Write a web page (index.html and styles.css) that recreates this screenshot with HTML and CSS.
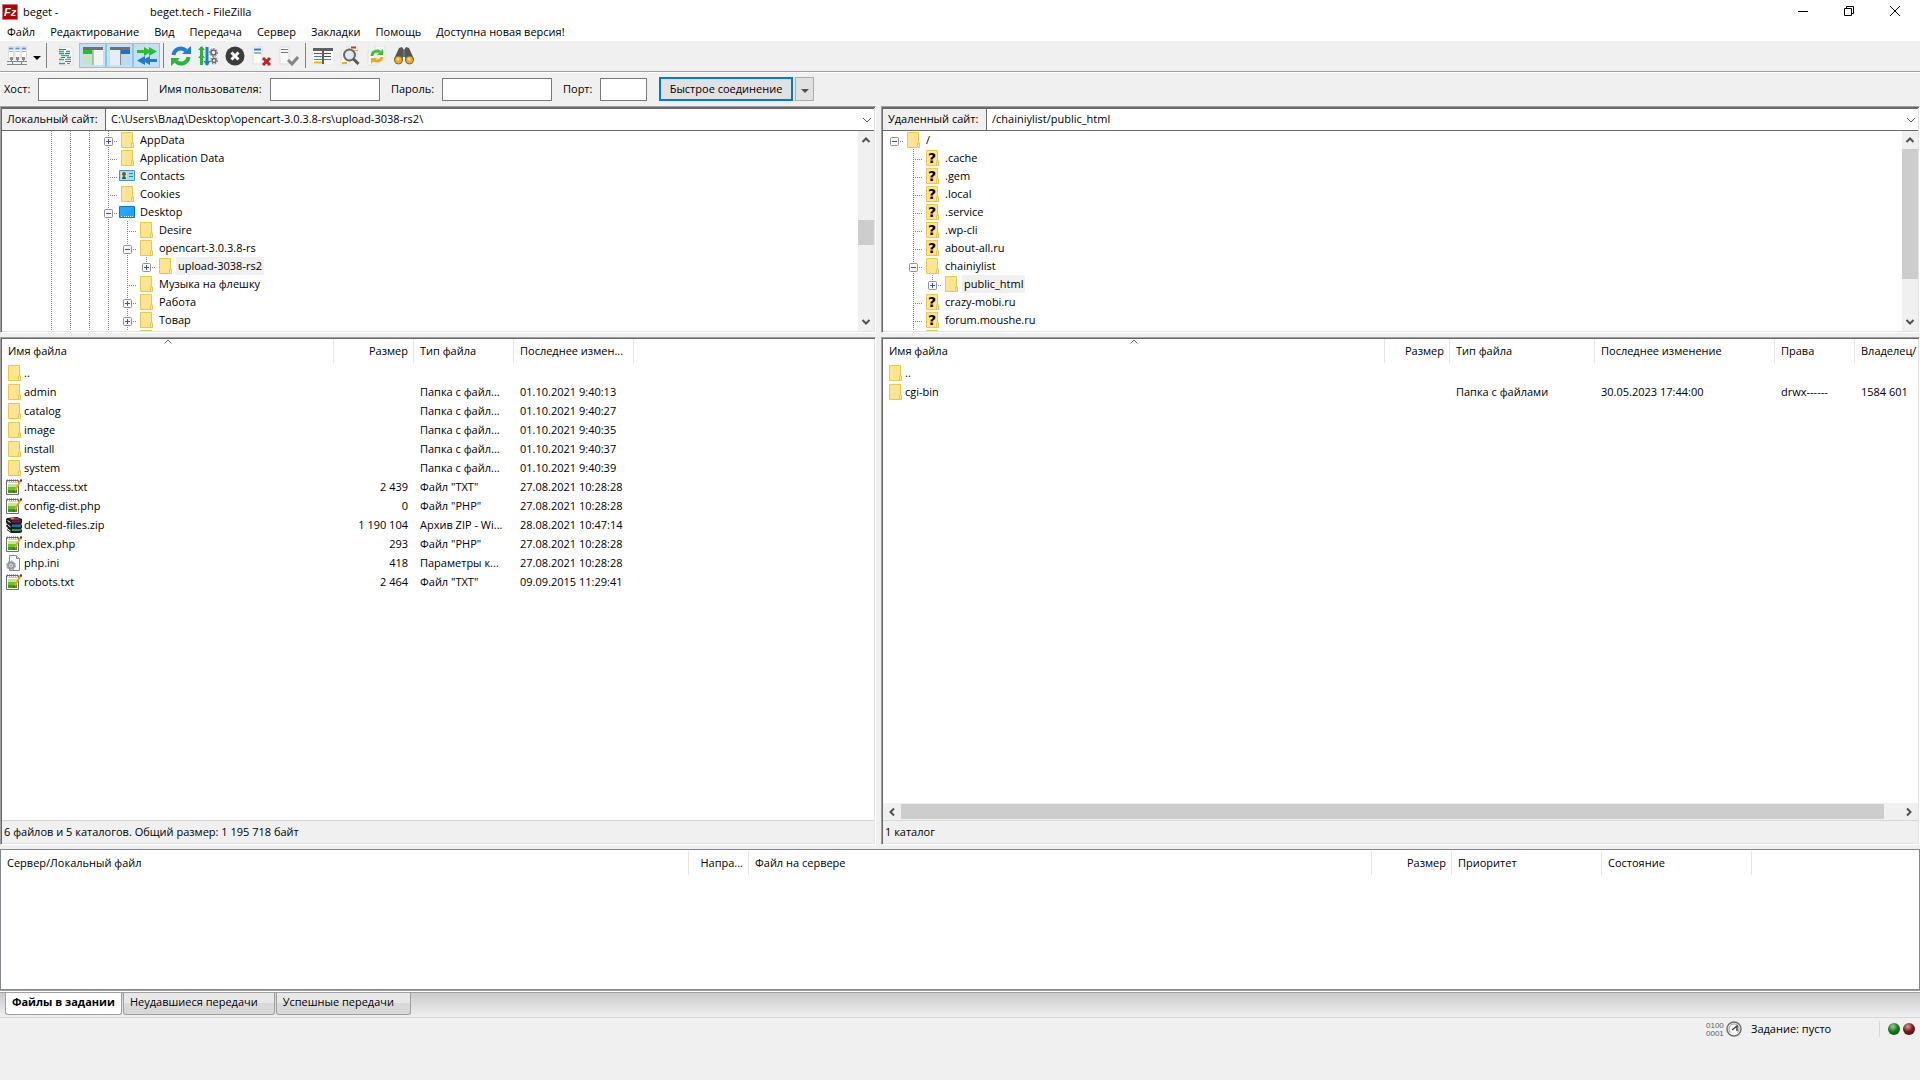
FILE: index.html
```html
<!DOCTYPE html>
<html lang="ru">
    <head>
        <meta charset="UTF-8">
        <meta name="viewport" content="width=device-width, initial-scale=1.0">
        <title>beget.tech - FileZilla</title>
        <link rel="stylesheet" href="styles.css">
    </head>
<body>
    <!-- Общие иконки -->
    <svg class="sprite" width="0" height="0">
        <symbol id="folder" viewBox="0 0 16 16">
            <path d="M2.500.5h11v10.500h1v4.500h-12z" fill="#ffe492" stroke="#eac84e"/>
            <path d="M12.500 15.500v-4.500h2v4.500z" fill="#ffe9a6" stroke="#eac84e"/>
        </symbol>
        <symbol id="unknown" viewBox="0 0 16 16">
            <use href="#folder"/>
            <text x="4" y="13" font-family="DejaVu Sans" font-weight="bold" font-size="14">?</text>
        </symbol>
        <symbol id="contacts" viewBox="0 0 16 16">
            <path d="M.5 2.500h15v10h-15z" fill="#a9dcf2" stroke="#4a97bd"/>
            <path d="M2 4h6v7h-6z" fill="#d8e8d8"/>
            <circle cx="5" cy="6" r="2" fill="#6b5a3c"/>
            <path d="M3 11c0-4 4-4 4 0z" fill="#2f5d4a"/>
            <path d="M10 5.500h4M10 8.500h4" stroke="#3d7da6"/>
        </symbol>
        <symbol id="desktop" viewBox="0 0 16 16">
            <path d="M.5 2.500h15v11h-15z" fill="#18a4fb" stroke="#0a7bd0"/>
            <path d="M1 3h12l-8 9h-4z" fill="#22a9ff"/>
            <path d="M2 12.500h2M5 12.500h7M13 12.500h1" stroke="#d8f0ff" stroke-dasharray="1 1"/>
        </symbol>
        <symbol id="plus" viewBox="0 0 9 9">
            <rect x=".5" y=".5" width="8" height="8" rx="1" fill="#f8f8f8" stroke="#919191"/>
            <path d="M2 4.500h5M4.500 2v5" stroke="#3a55a8"/>
        </symbol>
        <symbol id="minus" viewBox="0 0 9 9">
            <rect x=".5" y=".5" width="8" height="8" rx="1" fill="#f8f8f8" stroke="#919191"/>
            <path d="M2 4.500h5" stroke="#3a55a8"/>
        </symbol>
        <symbol id="note" viewBox="0 0 16 16">
            <path d="M.5 1.500h12v14h-12z" fill="#fff" stroke="#6e6e6e"/>
            <path d="M2 5h9v9h-9z" fill="#c4e88a"/>
            <path d="M2 8h9v6h-9z" fill="#6cc22c"/>
            <path d="M2 11h9v3h-9z" fill="#3f9a18"/>
            <path d="M1 1.500h11" stroke="#666" stroke-width="2" stroke-dasharray="1 1"/>
            <path d="M2.500 3.500h9" stroke="#ccc"/>
            <path d="M14.500 2l-6 10" stroke="#f0a020" stroke-width="2"/>
            <path d="M15.500.5l-1 2" stroke="#8c1a1a" stroke-width="2"/>
            <path d="M8.500 11.500l-1 2" stroke="#333"/>
        </symbol>
        <symbol id="zip" viewBox="0 0 16 16">
            <path d="M1 1l10-1 5 2v4l-1 1 1 1v3l-1 1 1 1v2l-2 1h-9l-4-3 1-2-2-2 1-2-2-3z" fill="#1a1a1a"/>
            <path d="M3 1l8-.5 4 2-9 .5z" fill="#a03060"/>
            <path d="M6 3.500h9v2h-9z" fill="#8c1548"/>
            <path d="M6 7.500h9v2.500h-9z" fill="#1f6fae"/>
            <path d="M6 12h9v2h-9z" fill="#1d9a5b"/>
            <path d="M1.500 3.500l3 2M1.500 7.500l3 2.500M1.500 12l3 2" stroke="#fff"/>
            <path d="M5 2l3-1" stroke="#e5b820"/>
        </symbol>
        <symbol id="ini" viewBox="0 0 16 16">
            <path d="M3.500.5h7l3 3v12h-10z" fill="#fafafa" stroke="#8b8b8b"/>
            <path d="M10.500.5v3h3" fill="#ddd" stroke="#8b8b8b"/>
            <circle cx="5" cy="10.500" r="3" fill="#dde3e8" stroke="#8e979f" stroke-width="2"/>
            <circle cx="5" cy="10.500" r="4.500" fill="none" stroke="#8e979f" stroke-dasharray="2 1.500"/>
            <circle cx="5" cy="10.500" r="1" fill="#8e979f"/>
        </symbol>
        <symbol id="up" viewBox="0 0 10 10"><path d="M1.500 7l3.500-3.500 3.500 3.500" fill="none" stroke="#505050" stroke-width="2"/></symbol>
        <symbol id="down" viewBox="0 0 10 10"><path d="M1.500 3l3.500 3.500 3.500-3.500" fill="none" stroke="#505050" stroke-width="2"/></symbol>
        <symbol id="left" viewBox="0 0 10 10"><path d="M7 1.500l-3.500 3.500 3.500 3.500" fill="none" stroke="#505050" stroke-width="2"/></symbol>
        <symbol id="right" viewBox="0 0 10 10"><path d="M3 1.500l3.500 3.500-3.500 3.500" fill="none" stroke="#505050" stroke-width="2"/></symbol>
        <symbol id="chevron" viewBox="0 0 10 10"><path d="M1 3l4 4 4-4" fill="none" stroke="#555"/></symbol>
        <symbol id="sort" viewBox="0 0 8 5"><path d="M.5 4.500l3.500-3.500 3.500 3.500" fill="none" stroke="#666"/></symbol>
        <symbol id="arrow" viewBox="0 0 8 4"><path d="M0 0h8l-4 4z"/></symbol>
    </svg>

    <header class="titlebar">
        <svg class="logo" viewBox="0 0 16 16">
            <rect x=".5" y=".5" width="15" height="15" fill="#b30000" stroke="#d86060" stroke-dasharray="1 1"/>
            <text x="2" y="12" font-family="Liberation Sans" font-weight="bold" font-style="italic" font-size="11" fill="#fff">Fz</text>
        </svg>
        <span class="title-site">beget -</span>
        <span>beget.tech - FileZilla</span>
        <div class="window-buttons">
            <button aria-label="Свернуть"><svg width="10" height="10"><path d="M0 5.500h10" stroke="#000"/></svg></button>
            <button aria-label="Восстановить"><svg width="10" height="10"><path d="M.5 2.500h7v7h-7zM2.500 2v-1.500h7v7h-2" fill="none" stroke="#000"/></svg></button>
            <button aria-label="Закрыть"><svg width="10" height="10"><path d="M0 0l10 10M10 0l-10 10" stroke="#000"/></svg></button>
        </div>
    </header>

    <nav class="menu">
        <button>Файл</button>
        <button>Редактирование</button>
        <button>Вид</button>
        <button>Передача</button>
        <button>Сервер</button>
        <button>Закладки</button>
        <button>Помощь</button>
        <button>Доступна новая версия!</button>
    </nav>

    <div class="toolbar">
        <div class="tools">
            <button class="tool" aria-label="Менеджер сайтов"><svg viewBox="0 0 20 20">
                <path d="M1.500.5h5v12h-5zM8 .5h5v12h-5zM14.500.5h5v12h-5z" fill="#fff" stroke="#dcdcdc"/>
                <path d="M2 2.500h4M8.500 2.500h4M15 2.500h4" stroke="#5a9ad8" stroke-width="2"/>
                <path d="M2 5.500h4M8.500 5.500h4M15 5.500h4" stroke="#b5b5b5"/>
                <path d="M0 15.500h20M4.500 13v3M10.500 13v3M16.500 13v3M5.500 16v2M14.500 16v2M0 18.500h20" stroke="#858585"/>
                <path d="M3 11h3v3h-3zM9 11h3v3h-3zM15 11h3v3h-3z" fill="#8a8a8a"/>
            </svg></button>
            <button class="tool-arrow" aria-label="Список сайтов"><svg width="8" height="4"><use href="#arrow"/></svg></button>
        </div>
        <div class="tools tools-view">
            <button class="tool" aria-label="Журнал сообщений"><svg viewBox="0 0 20 20">
                <path d="M4 1h10l3 3v15h-13z" fill="#fafafa" stroke="#dedede"/>
                <path d="M3 3.500h7M9 7.500h5M5 11.500h4M9 15.500h6" stroke="#6a6a6a"/>
                <path d="M10 5.500h4M3 7.500h5M11 11.500h4M3 17.500h6" stroke="#3f8fd0" stroke-width="1.500"/>
                <path d="M3 5.500h5M5 9.500h8M3 13.500h5" stroke="#50b050" stroke-width="1.500"/>
                <path d="M9 13.500h6M11 17.500h3" stroke="#8a8a8a"/>
            </svg></button>
            <button class="tool pressed" aria-label="Локальное дерево"><svg viewBox="0 0 20 20">
                <path d="M0 2h20v17h-20z" fill="#f2f4f2"/><path d="M0 5h10v14h-10z" fill="#c5e5c0"/>
                <path d="M0 1h20v3h-20z" fill="#707070"/><path d="M0 4h9v4h-9z" fill="#22c02a"/>
                <path d="M10 4v15" stroke="#888"/>
            </svg></button>
            <button class="tool pressed" aria-label="Удаленное дерево"><svg viewBox="0 0 20 20">
                <path d="M0 2h20v17h-20z" fill="#e4eef6"/><path d="M11 5h9v14h-9z" fill="#bcd8f2"/>
                <path d="M0 1h20v3h-20z" fill="#707070"/><path d="M11 4h9v4h-9z" fill="#2070c8"/>
                <path d="M10.500 4v15" stroke="#888"/>
            </svg></button>
            <button class="tool pressed" aria-label="Очередь передачи"><svg viewBox="0 0 20 20">
                <path d="M0 4h7v-3l5 3v-3l8 4.500-8 4.500v-3l-5 3v-3h-7z" fill="#25c02c"/>
                <path d="M20 13h-7v-3l-5 3v-3l-8 4.500 8 4.500v-3l5 3v-3h7z" fill="#2378c8"/>
            </svg></button>
        </div>
        <div class="tools">
            <button class="tool" aria-label="Обновить"><svg viewBox="0 0 20 20">
                <path d="M2.500 9a7.500 7.500 0 0 1 12.500-4.500" fill="none" stroke="#1f80d0" stroke-width="4"/>
                <path d="M11 8h9v-8z" fill="#1f80d0"/>
                <path d="M17.500 11a7.500 7.500 0 0 1-12.500 4.500" fill="none" stroke="#25b83a" stroke-width="4"/>
                <path d="M9 12h-9v8z" fill="#25b83a"/>
            </svg></button>
            <button class="tool" aria-label="Обработка очереди"><svg viewBox="0 0 20 20">
                <path d="M3.500 1v18" stroke="#25b83a" stroke-width="3"/><path d="M0 4l3.500-4 3.500 4M0 12l3.500-4 3.500 4" fill="#25b83a"/>
                <path d="M9 1v18" stroke="#1f80d0" stroke-width="3"/><path d="M5.500 15l3.500 5 3.500-5z" fill="#1f80d0"/>
                <circle cx="15.500" cy="6.500" r="2.500" fill="none" stroke="#666" stroke-width="1.500"/>
                <circle cx="15.500" cy="6.500" r="4" fill="none" stroke="#666" stroke-dasharray="1.500 1.500"/>
                <circle cx="16" cy="14.500" r="2" fill="none" stroke="#666" stroke-width="1.500"/>
                <circle cx="16" cy="14.500" r="3.500" fill="none" stroke="#666" stroke-dasharray="1.500 1.500"/>
            </svg></button>
            <button class="tool" aria-label="Отменить"><svg viewBox="0 0 20 20">
                <circle cx="10" cy="10" r="9.500" fill="#3c3c3c"/>
                <path d="M6.500 6.500l7 7M13.500 6.500l-7 7" stroke="#fff" stroke-width="3"/>
            </svg></button>
            <button class="tool" aria-label="Отключиться"><svg viewBox="0 0 20 20">
                <path d="M1 1h9v17h-9z" fill="#fafafa" stroke="#ddd"/>
                <path d="M2 3.500h7" stroke="#2f80d0" stroke-width="2"/><path d="M2 7h7" stroke="#666"/>
                <path d="M11 12l7 7M18 12l-7 7" stroke="#c81e1e" stroke-width="3"/>
            </svg></button>
            <button class="tool" aria-label="Переподключиться"><svg viewBox="0 0 20 20">
                <path d="M1 1h9v17h-9z" fill="#fafafa" stroke="#ddd"/>
                <path d="M2 3.500h7M2 6.500h7" stroke="#777"/>
                <path d="M9 14l4 4 6-7" fill="none" stroke="#858585" stroke-width="3"/>
            </svg></button>
        </div>
        <div class="tools">
            <button class="tool" aria-label="Фильтры"><svg viewBox="0 0 20 20">
                <path d="M0 3h20v15h-20z" fill="#fafafa"/><path d="M0 2h20v3h-20z" fill="#606060"/>
                <path d="M1 7.500h8" stroke="#d03030"/><path d="M1 10.500h8" stroke="#2f80d0"/>
                <path d="M11 7.500h7M11 10.500h7" stroke="#505050"/><path d="M1 13.500h17" stroke="#30b040"/>
                <path d="M1 16.500h8" stroke="#f0b020" stroke-width="2"/><path d="M10 4v14" stroke="#606060" stroke-width="2"/>
            </svg></button>
            <button class="tool" aria-label="Сравнение каталогов"><svg viewBox="0 0 20 20">
                <path d="M9 0h8v14h-8zM1 5h9v14h-9z" fill="#fafafa" stroke="#e0e0e0"/>
                <path d="M11 1.500h5" stroke="#d03030" stroke-width="2"/><path d="M2 17h5" stroke="#f0b020" stroke-width="2"/><path d="M14 4.500h4" stroke="#f0b020"/>
                <circle cx="9.500" cy="9" r="5.500" fill="#dfe8ee" stroke="#666" stroke-width="2"/>
                <path d="M13.500 13l5 5" stroke="#555" stroke-width="3"/>
            </svg></button>
            <button class="tool" aria-label="Синхронный просмотр"><svg viewBox="0 0 20 20">
                <path d="M8 0h10v14h-10zM1 6h9v13h-9z" fill="#fafafa" stroke="#e0e0e0"/>
                <path d="M5 10a5 5 0 0 1 8-4" fill="none" stroke="#40c030" stroke-width="3"/><path d="M10 9h6v-6z" fill="#40c030"/>
                <path d="M15 11a5 5 0 0 1-8 3" fill="none" stroke="#f0a818" stroke-width="3"/><path d="M10 12h-6v6z" fill="#f0a818"/>
            </svg></button>
            <button class="tool" aria-label="Поиск файлов"><svg viewBox="0 0 20 20">
                <path d="M5 2l3-1 2 3 2-3 3 1 5 11-8 3-1-5h-2l-1 5-8-3z" fill="#555"/>
                <path d="M10 4v7" stroke="#888"/>
                <circle cx="4.500" cy="14" r="4" fill="#f5ab14" stroke="#666"/>
                <circle cx="15.500" cy="14" r="4" fill="#f5ab14" stroke="#666"/>
                <circle cx="4" cy="13" r="1.500" fill="#ffdc70"/><circle cx="15" cy="13" r="1.500" fill="#ffdc70"/>
            </svg></button>
        </div>
    </div>

    <form class="quickconnect">
        <label for="host">Хост:</label>
        <input type="text" id="host">
        <label for="user">Имя пользователя:</label>
        <input type="text" id="user">
        <label for="pass">Пароль:</label>
        <input type="password" id="pass">
        <label for="port">Порт:</label>
        <input type="text" id="port">
        <div class="connect">
            <button type="button" class="connect-button">Быстрое соединение</button>
            <button type="button" class="connect-list" aria-label="История"><svg width="8" height="4" fill="#505050"><use href="#arrow"/></svg></button>
        </div>
    </form>

    <main class="sites">
        <section class="site">
            <div class="tree-panel">
                <div class="address">
                    <label for="local-path">Локальный сайт:</label>
                    <select id="local-path"><option>C:\Users\Влад\Desktop\opencart-3.0.3.8-rs\upload-3038-rs2\</option></select>
                    <svg class="address-arrow"><use href="#chevron"/></svg>
                </div>
                <div class="tree-area">
                    <ul class="tree tree-local">
                        <li><i class="v"></i><i class="v"></i><i class="v"></i><i class="v h"><svg><use href="#plus"/></svg></i><svg class="icon"><use href="#folder"/></svg><span>AppData</span></li>
                        <li><i class="v"></i><i class="v"></i><i class="v"></i><i class="v h"></i><svg class="icon"><use href="#folder"/></svg><span>Application Data</span></li>
                        <li><i class="v"></i><i class="v"></i><i class="v"></i><i class="v h"></i><svg class="icon"><use href="#contacts"/></svg><span>Contacts</span></li>
                        <li><i class="v"></i><i class="v"></i><i class="v"></i><i class="v h"></i><svg class="icon"><use href="#folder"/></svg><span>Cookies</span></li>
                        <li><i class="v"></i><i class="v"></i><i class="v"></i><i class="v h"><svg><use href="#minus"/></svg></i><svg class="icon"><use href="#desktop"/></svg><span>Desktop</span></li>
                        <li><i class="v"></i><i class="v"></i><i class="v"></i><i class="v"></i><i class="v h"></i><svg class="icon"><use href="#folder"/></svg><span>Desire</span></li>
                        <li><i class="v"></i><i class="v"></i><i class="v"></i><i class="v"></i><i class="v h"><svg><use href="#minus"/></svg></i><svg class="icon"><use href="#folder"/></svg><span>opencart-3.0.3.8-rs</span></li>
                        <li><i class="v"></i><i class="v"></i><i class="v"></i><i class="v"></i><i class="v"></i><i class="v h last"><svg><use href="#plus"/></svg></i><svg class="icon"><use href="#folder"/></svg><span class="selected">upload-3038-rs2</span></li>
                        <li><i class="v"></i><i class="v"></i><i class="v"></i><i class="v"></i><i class="v h"></i><svg class="icon"><use href="#folder"/></svg><span>Музыка на флешку</span></li>
                        <li><i class="v"></i><i class="v"></i><i class="v"></i><i class="v"></i><i class="v h"><svg><use href="#plus"/></svg></i><svg class="icon"><use href="#folder"/></svg><span>Работа</span></li>
                        <li><i class="v"></i><i class="v"></i><i class="v"></i><i class="v"></i><i class="v h"><svg><use href="#plus"/></svg></i><svg class="icon"><use href="#folder"/></svg><span>Товар</span></li>
                        <li><i class="v"></i><i class="v"></i><i class="v"></i><i class="v"></i><i class="v h"></i><svg class="icon"><use href="#folder"/></svg></li>
                    </ul>
                    <div class="scroll">
                        <svg><use href="#up"/></svg>
                        <div class="track track-local"><div class="thumb"></div></div>
                        <svg><use href="#down"/></svg>
                    </div>
                </div>
            </div>

            <div class="list-panel">
                <div class="list">
                    <table class="files">
                        <colgroup><col class="c-name-local"><col class="c-80"><col class="c-100"><col class="c-120"></colgroup>
                        <thead>
                            <tr><th>Имя файла<svg class="sort"><use href="#sort"/></svg></th><th class="num">Размер</th><th>Тип файла</th><th>Последнее измен...</th></tr>
                        </thead>
                        <tbody>
                            <tr><td><svg class="icon"><use href="#folder"/></svg>..</td><td></td><td></td><td></td></tr>
                            <tr><td><svg class="icon"><use href="#folder"/></svg>admin</td><td></td><td>Папка с файл...</td><td>01.10.2021 9:40:13</td></tr>
                            <tr><td><svg class="icon"><use href="#folder"/></svg>catalog</td><td></td><td>Папка с файл...</td><td>01.10.2021 9:40:27</td></tr>
                            <tr><td><svg class="icon"><use href="#folder"/></svg>image</td><td></td><td>Папка с файл...</td><td>01.10.2021 9:40:35</td></tr>
                            <tr><td><svg class="icon"><use href="#folder"/></svg>install</td><td></td><td>Папка с файл...</td><td>01.10.2021 9:40:37</td></tr>
                            <tr><td><svg class="icon"><use href="#folder"/></svg>system</td><td></td><td>Папка с файл...</td><td>01.10.2021 9:40:39</td></tr>
                            <tr><td><svg class="icon"><use href="#note"/></svg>.htaccess.txt</td><td class="num">2 439</td><td>Файл "TXT"</td><td>27.08.2021 10:28:28</td></tr>
                            <tr><td><svg class="icon"><use href="#note"/></svg>config-dist.php</td><td class="num">0</td><td>Файл "PHP"</td><td>27.08.2021 10:28:28</td></tr>
                            <tr><td><svg class="icon"><use href="#zip"/></svg>deleted-files.zip</td><td class="num">1 190 104</td><td>Архив ZIP - Wi...</td><td>28.08.2021 10:47:14</td></tr>
                            <tr><td><svg class="icon"><use href="#note"/></svg>index.php</td><td class="num">293</td><td>Файл "PHP"</td><td>27.08.2021 10:28:28</td></tr>
                            <tr><td><svg class="icon"><use href="#ini"/></svg>php.ini</td><td class="num">418</td><td>Параметры к...</td><td>27.08.2021 10:28:28</td></tr>
                            <tr><td><svg class="icon"><use href="#note"/></svg>robots.txt</td><td class="num">2 464</td><td>Файл "TXT"</td><td>09.09.2015 11:29:41</td></tr>
                        </tbody>
                    </table>
                </div>
                <div class="list-status">6 файлов и 5 каталогов. Общий размер: 1 195 718 байт</div>
            </div>
        </section>

        <section class="site">
            <div class="tree-panel">
                <div class="address">
                    <label for="remote-path">Удаленный сайт:</label>
                    <select id="remote-path"><option>/chainiylist/public_html</option></select>
                    <svg class="address-arrow"><use href="#chevron"/></svg>
                </div>
                <div class="tree-area">
                    <ul class="tree">
                        <li><i class="h"><svg><use href="#minus"/></svg></i><svg class="icon"><use href="#folder"/></svg><span>/</span></li>
                        <li><i></i><i class="v h"></i><svg class="icon"><use href="#unknown"/></svg><span>.cache</span></li>
                        <li><i></i><i class="v h"></i><svg class="icon"><use href="#unknown"/></svg><span>.gem</span></li>
                        <li><i></i><i class="v h"></i><svg class="icon"><use href="#unknown"/></svg><span>.local</span></li>
                        <li><i></i><i class="v h"></i><svg class="icon"><use href="#unknown"/></svg><span>.service</span></li>
                        <li><i></i><i class="v h"></i><svg class="icon"><use href="#unknown"/></svg><span>.wp-cli</span></li>
                        <li><i></i><i class="v h"></i><svg class="icon"><use href="#unknown"/></svg><span>about-all.ru</span></li>
                        <li><i></i><i class="v h"><svg><use href="#minus"/></svg></i><svg class="icon"><use href="#folder"/></svg><span>chainiylist</span></li>
                        <li><i></i><i class="v"></i><i class="v h last"><svg><use href="#plus"/></svg></i><svg class="icon"><use href="#folder"/></svg><span class="selected">public_html</span></li>
                        <li><i></i><i class="v h"></i><svg class="icon"><use href="#unknown"/></svg><span>crazy-mobi.ru</span></li>
                        <li><i></i><i class="v h"></i><svg class="icon"><use href="#unknown"/></svg><span>forum.moushe.ru</span></li>
                        <li><i></i><i class="v h"></i><svg class="icon"><use href="#folder"/></svg></li>
                    </ul>
                    <div class="scroll">
                        <svg><use href="#up"/></svg>
                        <div class="track"><div class="thumb thumb-remote"></div></div>
                        <svg><use href="#down"/></svg>
                    </div>
                </div>
            </div>

            <div class="list-panel">
                <div class="list">
                    <table class="files">
                        <colgroup><col class="c-name-remote"><col class="c-65"><col class="c-145"><col class="c-180"><col class="c-80"><col class="c-80"></colgroup>
                        <thead>
                            <tr><th>Имя файла<svg class="sort"><use href="#sort"/></svg></th><th class="num">Размер</th><th>Тип файла</th><th>Последнее изменение</th><th>Права</th><th>Владелец/</th></tr>
                        </thead>
                        <tbody>
                            <tr><td><svg class="icon"><use href="#folder"/></svg>..</td><td></td><td></td><td></td><td></td><td></td></tr>
                            <tr><td><svg class="icon"><use href="#folder"/></svg>cgi-bin</td><td></td><td>Папка с файлами</td><td>30.05.2023 17:44:00</td><td>drwx------</td><td>1584 601</td></tr>
                        </tbody>
                    </table>
                </div>
                <div class="scroll scroll-bottom">
                    <svg><use href="#left"/></svg>
                    <div class="track"><div class="thumb"></div></div>
                    <svg><use href="#right"/></svg>
                </div>
                <div class="list-status">1 каталог</div>
            </div>
        </section>
    </main>

    <section class="queue">
        <table class="files">
            <colgroup><col class="c-server"><col class="c-60"><col class="c-remote"><col class="c-80"><col class="c-150"><col class="c-150"></colgroup>
            <thead>
                <tr><th>Сервер/Локальный файл</th><th class="num">Напра...</th><th>Файл на сервере</th><th class="num">Размер</th><th>Приоритет</th><th>Состояние</th></tr>
            </thead>
        </table>
    </section>

    <div class="tabs">
        <button class="tab active">Файлы в задании</button>
        <button class="tab">Неудавшиеся передачи</button>
        <button class="tab">Успешные передачи</button>
    </div>

    <footer class="statusbar">
        <svg width="18" height="16" font-family="Liberation Sans" font-size="8" fill="#606060">
            <text x="0" y="7">0100</text>
            <text x="0" y="15">0001</text>
        </svg>
        <svg width="16" height="16" fill="none" stroke="#707070">
            <circle cx="8" cy="8" r="7" fill="#f8f8f8" stroke-width="1.500"/>
            <path d="M4.500 11.500a5 5 0 1 1 7 0" stroke="#999"/>
            <path d="M6 9l5-4v5" stroke="#444" stroke-width="1.500"/>
        </svg>
        <span class="queue-state">Задание: пусто</span>
        <span class="led led-green"></span>
        <span class="led led-red"></span>
    </footer>
</body>
</html>
```
FILE: styles.css
```css
* {
    box-sizing: border-box;
}

body {
    display: flex;
    flex-direction: column;
    min-height: 100vh;
    margin: 0;
    background-color: #F0F0F0;
    color: #000000;
    font-family: "Open Sans", "Noto Sans", sans-serif;
    font-size: 11px;
    line-height: 16px;
}

button, input, select {
    font: inherit;
    color: inherit;
    margin: 0;
    padding: 0;
    border: none;
    border-radius: 0;
    background: none;
}

.sprite {
    position: absolute;
}

.icon {
    width: 16px;
    height: 16px;
    flex: none;
}

/* Заголовок окна */
.titlebar {
    display: flex;
    align-items: center;
    height: 24px;
    padding-left: 2px;
    background-color: #FFFFFF;
}

.logo {
    width: 16px;
    height: 16px;
    margin-right: 5px;
}

.title-site {
    width: 127px;
}

.window-buttons {
    display: flex;
    margin-left: auto;
    padding-right: 2px;
}

.window-buttons button {
    display: flex;
    align-items: center;
    justify-content: center;
    width: 46px;
    height: 24px;
    padding-bottom: 3px;
}

/* Меню */
.menu {
    display: flex;
    gap: 15px;
    height: 17px;
    padding-left: 7px;
    background-color: #FFFFFF;
}

.menu button {
    height: 16px;
    white-space: nowrap;
}

/* Панель инструментов */
.toolbar {
    display: flex;
    height: 31px;
    padding: 2px 0 3px;
    border-bottom: 1px solid #A0A0A0;
    box-shadow: 0 1px 0 #FFFFFF;
}

.tools {
    display: flex;
    padding: 0 3px;
}

.tools + .tools {
    border-left: 1px solid #808080;
}

.tools-view {
    padding-left: 5px;
}

.tool {
    display: flex;
    align-items: center;
    justify-content: center;
    width: 27px;
    height: 25px;
}

.tool svg {
    width: 20px;
    height: 20px;
}

.tool-arrow {
    width: 13px;
    line-height: 8px;
}

.pressed {
    background-color: #C2E0F7;
    border: 1px solid #8CC5EE;
}

/* Быстрое соединение */
.quickconnect {
    display: grid;
    grid-template-columns: 34px 110px 122px 110px 62px 110px 48px 47px auto;
    align-items: center;
    height: 34px;
    padding-left: 4px;
}

.quickconnect label + input ~ label {
    padding-left: 11px;
}

.quickconnect input {
    width: 100%;
    height: 23px;
    padding: 0 4px;
    border: 1px solid #7A7A7A;
    background-color: #FFFFFF;
}

.connect {
    display: flex;
    gap: 2px;
    padding-left: 12px;
}

.connect-button {
    width: 134px;
    height: 24px;
    border: 2px solid #0078D7;
    background-color: #E1E1E1;
}

.connect-list {
    width: 19px;
    height: 24px;
    border: 1px solid #ADADAD;
    background-color: #E1E1E1;
    line-height: 8px;
}

/* Локальный и удаленный сайт */
.sites {
    display: grid;
    grid-template-columns: 876fr 1039fr;
    gap: 5px;
    flex: 1;
    margin-bottom: 4px;
}

.site {
    display: flex;
    flex-direction: column;
    gap: 4px;
    min-width: 0;
}

.tree-panel, .list-panel {
    border: 1px solid;
    border-color: #A0A0A0 #FFFFFF #FFFFFF #A0A0A0;
    box-shadow: inset 1px 1px 0 #696969, inset -1px -1px 0 #E3E3E3;
    padding: 1px;
}

.address {
    position: relative;
    display: flex;
    height: 23px;
    border-top: 1px solid #696969;
    border-bottom: 1px solid #696969;
    background-color: #FFFFFF;
}

.address label {
    width: 104px;
    padding-left: 5px;
    border-right: 1px solid #696969;
    background-color: #F0F0F0;
    line-height: 20px;
}

.address select {
    flex: 1;
    appearance: none;
    padding: 0 20px 1px 5px;
}

.address-arrow {
    position: absolute;
    right: 2px;
    top: 6px;
    width: 10px;
    height: 10px;
    pointer-events: none;
}

.tree-area {
    display: flex;
    height: 200px;
    background-color: #FFFFFF;
}

.tree {
    flex: 1;
    margin: 0;
    padding: 0 0 0 2px;
    overflow: hidden;
    list-style: none;
}

.tree-local {
    padding-left: 40px;
}

.tree li {
    display: flex;
    align-items: center;
    height: 18px;
}

.tree span {
    height: 18px;
    margin-left: 3px;
    padding: 0 2px;
    line-height: 18px;
    white-space: nowrap;
}

.tree .selected {
    background-color: #F0F0F0;
}

.tree .icon {
    margin-left: 1px;
}

/* Линии дерева */
.tree i {
    flex: none;
    width: 19px;
    height: 18px;
    background-repeat: no-repeat;
}

.tree .v {
    background-image: repeating-linear-gradient(#808080 0 1px, transparent 1px 2px);
    background-size: 1px 18px;
    background-position: 9px 0;
}

.tree .h {
    padding: 6px 5px 3px;
    line-height: 0;
    background-image: repeating-linear-gradient(90deg, #808080 0 1px, transparent 1px 2px);
    background-size: 10px 1px;
    background-position: 9px 10px;
}

.tree .v.h {
    background-image: repeating-linear-gradient(#808080 0 1px, transparent 1px 2px), repeating-linear-gradient(90deg, #808080 0 1px, transparent 1px 2px);
    background-size: 1px 18px, 10px 1px;
    background-position: 9px 0, 9px 10px;
}

.tree .v.h.last {
    background-size: 1px 10px, 10px 1px;
}

.tree i svg {
    width: 9px;
    height: 9px;
}

/* Полосы прокрутки */
.scroll {
    display: flex;
    flex-direction: column;
    align-items: center;
    width: 16px;
    background-color: #F0F0F0;
}

.scroll svg {
    flex: none;
    width: 10px;
    height: 10px;
    margin: 4px 3px;
}

.track {
    flex: 1;
    width: 100%;
}

.track-local {
    padding-top: 71px;
}

.thumb {
    height: 25px;
    background-color: #CDCDCD;
}

.thumb-remote {
    height: 130px;
}

.scroll-bottom {
    flex-direction: row;
    width: auto;
    height: 17px;
}

.scroll-bottom svg {
    margin: 3px 4px;
}

.scroll-bottom .track {
    padding-right: 16px;
}

.scroll-bottom .thumb {
    height: 15px;
}

/* Списки файлов */
.list-panel {
    display: flex;
    flex-direction: column;
    flex: 1;
}

.list {
    flex: 1;
    overflow: hidden;
    background-color: #FFFFFF;
}

.list-status {
    height: 23px;
    padding: 3px 2px;
    border-top: 1px solid #D7D7D7;
}

.files {
    table-layout: fixed;
    width: 0;
    border-spacing: 0;
}

.files th, .files td {
    padding: 0 6px;
    font-weight: normal;
    text-align: left;
    white-space: nowrap;
}

.files th {
    position: relative;
    height: 24px;
    padding-right: 5px;
    border-right: 1px solid #E5E5E5;
}

.files td {
    height: 19px;
}

.files td:first-child {
    padding-left: 4px;
}

.files .num {
    text-align: right;
}

.files .icon {
    margin-right: 2px;
    vertical-align: top;
}

.sort {
    position: absolute;
    top: 0;
    left: 50%;
    width: 8px;
    height: 5px;
    margin-left: -4px;
}

.c-name-local { width: 332px; }
.c-name-remote { width: 502px; }
.c-server { width: 688px; }
.c-remote { width: 623px; }
.c-60 { width: 60px; }
.c-65 { width: 65px; }
.c-80 { width: 80px; }
.c-100 { width: 100px; }
.c-120 { width: 120px; }
.c-145 { width: 145px; }
.c-150 { width: 150px; }
.c-180 { width: 180px; }

/* Очередь передачи */
.queue {
    height: 141px;
    padding-top: 1px;
    border: 1px solid #828790;
    background-color: #FFFFFF;
}

/* Вкладки */
.tabs {
    display: flex;
    gap: 1px;
    height: 28px;
    padding: 0 5px 3px;
    border-top: 1px solid #A0A0A0;
    border-bottom: 1px solid #D7D7D7;
    background: linear-gradient(#C8C8C8, #F0F0F0);
    box-shadow: inset 0 1px 0 #FFFFFF, inset 0 2px 0 #A0A0A0;
}

.tab {
    height: 22px;
    margin-top: 2px;
    padding: 0 16px 4px 6px;
    border: 1px solid #A0A0A0;
    border-top: none;
    border-radius: 0 0 3px 3px;
    background: linear-gradient(#E8E8E8 50%, #D9D9D9 50%);
}

.tab.active {
    padding: 0 6px 4px;
    background: #FFFFFF;
    font-weight: bold;
}

/* Строка состояния */
.statusbar {
    display: flex;
    align-items: flex-start;
    justify-content: flex-end;
    height: 62px;
    padding: 3px 3px 0 0;
}

.statusbar svg {
    margin-right: 2px;
}

.queue-state {
    width: 136px;
    margin-right: 7px;
    padding-left: 7px;
    border-right: 1px solid #D7D7D7;
}

.led {
    width: 12px;
    height: 12px;
    margin: 2px 2px 2px 1px;
    border-radius: 50%;
}

.led-green {
    background: radial-gradient(circle at 40% 30%, #9FD09F, #1B7A1B 45%, #0A4A0A);
}

.led-red {
    background: radial-gradient(circle at 40% 30%, #D09F9F, #7A1B1B 45%, #4A0A0A);
}
```
